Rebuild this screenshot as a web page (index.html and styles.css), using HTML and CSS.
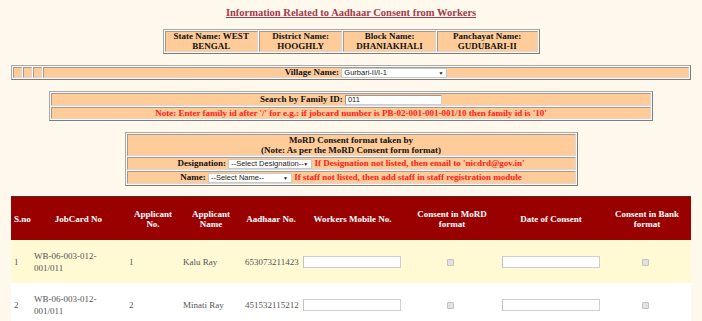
FILE: index.html
```html
<!DOCTYPE html>
<html>
<head>
<meta charset="utf-8">
<link rel="stylesheet" href="styles.css">
</head>
<body>
<div class="page">
  <h1 class="title">Information Related to Aadhaar Consent from Workers</h1>

  <table class="box state">
    <tr>
      <td class="c-state">State Name: WEST<br>BENGAL</td>
      <td class="c-dist">District Name:<br>HOOGHLY</td>
      <td class="c-block">Block Name:<br>DHANIAKHALI</td>
      <td class="c-panch">Panchayat Name:<br>GUDUBARI-II</td>
    </tr>
  </table>

  <table class="box village">
    <tr>
      <td class="blank"></td>
      <td class="blank"></td>
      <td class="blank"></td>
      <td class="vcell">Village Name: <span class="sel sel-village">Gurbari-II/I-1<i class="arr">&#9660;</i></span></td>
    </tr>
  </table>

  <table class="box search">
    <tr><td class="scell">Search by Family ID: <span class="txt txt-family">011</span></td></tr>
    <tr><td class="note">Note: Enter family id after '/' for e.g.: if jobcard number is PB-02-001-001-001/10 then family id is '10'</td></tr>
  </table>

  <table class="box mord">
    <tr><td class="mhead">MoRD Consent format taken by<br>(Note: As per the MoRD Consent form format)</td></tr>
    <tr><td class="mrow">Designation: <span class="sel sel-desig">--Select Designation--<i class="arr">&#9660;</i></span> <span class="red">If Designation not listed, then email to 'nicdrd@gov.in'</span></td></tr>
    <tr><td class="mrow">Name: <span class="sel sel-name">--Select Name--<i class="arr">&#9660;</i></span> <span class="red">If staff not listed, then add staff in staff registration module</span></td></tr>
  </table>

  <table class="grid">
    <colgroup>
      <col class="w1"><col class="w2"><col class="w3"><col class="w4"><col class="w5"><col class="w6"><col class="w7"><col class="w8"><col class="w9">
    </colgroup>
    <thead>
      <tr>
        <th class="left">S.no</th>
        <th>JobCard No</th>
        <th>Applicant<br>No.</th>
        <th>Applicant<br>Name</th>
        <th>Aadhaar No.</th>
        <th>Workers Mobile No.</th>
        <th>Consent in MoRD<br>format</th>
        <th>Date of Consent</th>
        <th>Consent in Bank<br>format</th>
      </tr>
    </thead>
    <tbody>
      <tr class="odd">
        <td>1</td>
        <td>WB-06-003-012-<br>001/011</td>
        <td>1</td>
        <td>Kalu Ray</td>
        <td>653073211423</td>
        <td><span class="txt txt-row"></span></td>
        <td class="mid"><span class="chk"></span></td>
        <td><span class="txt txt-row"></span></td>
        <td class="mid"><span class="chk"></span></td>
      </tr>
      <tr class="even">
        <td>2</td>
        <td>WB-06-003-012-<br>001/011</td>
        <td>2</td>
        <td>Minati Ray</td>
        <td>451532115212</td>
        <td><span class="txt txt-row"></span></td>
        <td class="mid"><span class="chk"></span></td>
        <td><span class="txt txt-row"></span></td>
        <td class="mid"><span class="chk"></span></td>
      </tr>
    </tbody>
  </table>
</div>
</body>
</html>
```

FILE: styles.css
```css
html, body {
  margin: 0;
  padding: 0;
  background: #fff8ec;
  font-family: "Liberation Serif", "Times New Roman", serif;
  overflow: hidden;
}

.page {
  display: flex;
  flex-direction: column;
  align-items: center;
  gap: 11px;
  padding-top: 7px;
}

.title {
  margin: 0 0 -1px 0;
  font-size: 10.5px;
  line-height: 12px;
  font-weight: bold;
  color: #a23a4a;
  text-decoration: underline;
}

.box {
  border-collapse: separate;
  border-spacing: 1px;
  border: 1px solid #a8a8a8;
  border-right-color: #7c7c7c;
  border-bottom-color: #7c7c7c;
  background: #fff8ec;
}

.box td {
  background: #ffcc99;
  border: 1px solid #9c9c9c;
  border-right-color: #d8d8d8;
  border-bottom-color: #d8d8d8;
  padding: 0 2px;
  font-size: 9px;
  line-height: 10px;
  font-weight: bold;
  color: #111;
  text-align: center;
  white-space: nowrap;
}

.state { width: 377px; }
.state td { padding: 0 2px; line-height: 9.5px; height: 19px; }
.c-state { width: 89px; }
.c-dist { width: 80px; }
.c-block { width: 89px; }
.c-panch { width: 98px; }

.village { width: 680px; }
.village td { height: 9px; line-height: 9px; padding: 0 2px; }
.village td.blank { width: 7px; padding: 0; }

.search { width: 604px; }
.search td.scell { height: 11px; line-height: 11px; }
.search td.note { height: 10px; line-height: 10px; color: #ff1a1a; }

.mord { width: 453px; }
.mord td.mhead { height: 20px; line-height: 10px; padding: 0 2px; }
.mord td.mrow { height: 11px; line-height: 11px; padding: 0 2px; }
.red { color: #ff1a1a; }

.sel, .txt {
  display: inline-block;
  position: relative;
  vertical-align: middle;
  box-sizing: border-box;
  background: #fff;
  border: 1px solid #c8c8c8;
  font-family: "Liberation Sans", Arial, sans-serif;
  font-weight: normal;
  font-size: 7.5px;
  line-height: 8px;
  height: 10px;
  color: #222;
  text-align: left;
  padding: 0 2px;
  margin: -1px 0;
}

.arr {
  position: absolute;
  right: 3px;
  top: 0;
  font-style: normal;
  font-size: 5px;
  line-height: 8px;
}

.sel-village { width: 106px; }
.sel-desig { width: 84px; }
.sel-name { width: 84px; }
.txt-family { width: 97px; border-color: #d0d0d0; border-top-color: #999; border-left-color: #999; }

.grid {
  width: 680px;
  border-collapse: collapse;
  table-layout: fixed;
  border-top: 1px solid #5a2a1a;
  margin-top: -1px;
}

.w1 { width: 20px; }
.w2 { width: 95px; }
.w3 { width: 54px; }
.w4 { width: 62px; }
.w5 { width: 58px; }
.w6 { width: 105px; }
.w7 { width: 94px; }
.w8 { width: 104px; }
.w9 { width: 88px; }

.grid th {
  background: #990000;
  color: #fff;
  font-size: 9px;
  line-height: 10px;
  font-weight: bold;
  height: 43px;
  padding: 0 2px;
  text-align: center;
  vertical-align: middle;
}

.grid th.left { text-align: left; padding-left: 3px; }

.grid td {
  font-size: 9px;
  line-height: 12px;
  color: #555;
  height: 43px;
  padding: 0 2px 0 3px;
  vertical-align: middle;
  text-align: left;
}

.grid td.mid { text-align: center; }

.odd td { background: #fffad4; }
.even td { background: #ffffff; }

.grid .txt-row {
  width: 98px;
  height: 12px;
  border: 1px solid #cfcfcf;
  border-left-color: #c0c0c0;
  margin: 0;
}

.chk {
  display: inline-block;
  width: 7px;
  height: 7px;
  box-sizing: border-box;
  background: #e2e2e2;
  border: 1px solid #c2c2c2;
  border-radius: 1px;
  vertical-align: middle;
  margin-right: 4px;
}
```
